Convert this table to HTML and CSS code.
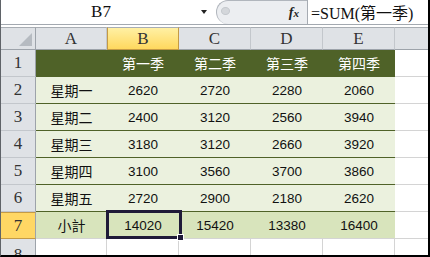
FILE: index.html
```html
<!DOCTYPE html>
<html lang="zh-Hant">
<head>
    <meta charset="UTF-8">
    <title>Excel 小計</title>
    <link rel="stylesheet" href="styles.css">
</head>
<body>

<div class="sheet">
    <div class="formula-bar">
        <div class="name-box">
            <span class="cell-ref">B7</span>
            <span class="drop-arrow"></span>
        </div>
        <div class="fx-area">
            <span class="knob"></span>
            <span class="fx">f<span class="fx-x">x</span></span>
        </div>
        <div class="formula">=SUM(第一季)</div>
    </div>
    <div class="divider"></div>

    <div class="grid">
        <!-- header row -->
        <div class="corner"><span class="tri"></span></div>
        <div class="col-head">A</div>
        <div class="col-head active">B</div>
        <div class="col-head">C</div>
        <div class="col-head">D</div>
        <div class="col-head">E</div>
        <div class="col-head last"></div>

        <!-- row 1 -->
        <div class="row-head">1</div>
        <div class="cell title"></div>
        <div class="cell title">第一季</div>
        <div class="cell title">第二季</div>
        <div class="cell title">第三季</div>
        <div class="cell title">第四季</div>
        <div class="cell blank"></div>

        <div class="row-head">2</div>
        <div class="cell day">星期一</div>
        <div class="cell day num">2620</div>
        <div class="cell day num">2720</div>
        <div class="cell day num">2280</div>
        <div class="cell day num">2060</div>
        <div class="cell blank"></div>

        <div class="row-head">3</div>
        <div class="cell day">星期二</div>
        <div class="cell day num">2400</div>
        <div class="cell day num">3120</div>
        <div class="cell day num">2560</div>
        <div class="cell day num">3940</div>
        <div class="cell blank"></div>

        <div class="row-head">4</div>
        <div class="cell day">星期三</div>
        <div class="cell day num">3180</div>
        <div class="cell day num">3120</div>
        <div class="cell day num">2660</div>
        <div class="cell day num">3920</div>
        <div class="cell blank"></div>

        <div class="row-head">5</div>
        <div class="cell day">星期四</div>
        <div class="cell day num">3100</div>
        <div class="cell day num">3560</div>
        <div class="cell day num">3700</div>
        <div class="cell day num">3860</div>
        <div class="cell blank"></div>

        <div class="row-head">6</div>
        <div class="cell day">星期五</div>
        <div class="cell day num">2720</div>
        <div class="cell day num">2900</div>
        <div class="cell day num">2180</div>
        <div class="cell day num">2620</div>
        <div class="cell blank"></div>

        <div class="row-head active">7</div>
        <div class="cell total">小計</div>
        <div class="cell total num selected">14020<span class="fill-handle"></span></div>
        <div class="cell total num">15420</div>
        <div class="cell total num">13380</div>
        <div class="cell total num">16400</div>
        <div class="cell blank"></div>

        <div class="row-head cut">8</div>
        <div class="cell empty"></div>
        <div class="cell empty"></div>
        <div class="cell empty"></div>
        <div class="cell empty"></div>
        <div class="cell empty"></div>
        <div class="cell empty last"></div>
    </div>
</div>

</body>
</html>
```

FILE: styles.css
```css
body {
    margin: 0;
    padding: 0;
    background: white;
}
.sheet {
    width: 430px;
    height: 257px;
    box-sizing: border-box;
    border-left: 1px solid #5f6368;
    border-right: 2px solid #000;
    border-bottom: 2px solid #000;
    display: flex;
    flex-direction: column;
    overflow: hidden;
    background: white;
}

/* formula bar */
.formula-bar {
    height: 24px;
    border-bottom: 1px solid #a3a9b0;
    display: flex;
    flex-shrink: 0;
}
.name-box {
    width: 215px;
    display: flex;
    align-items: center;
}
.cell-ref {
    flex: 1;
    text-align: center;
    font-family: "Liberation Serif", serif;
    font-size: 17px;
    color: #111;
}
.drop-arrow {
    width: 0;
    height: 0;
    border-left: 3px solid transparent;
    border-right: 3px solid transparent;
    border-top: 4px solid #222;
    margin-right: 9px;
}
.fx-area {
    width: 91px;
    background: #eceef1;
    border: 1px solid #b1b6bd;
    border-right: none;
    border-bottom: none;
    border-radius: 12px 0 0 12px;
    display: flex;
    align-items: center;
    justify-content: space-between;
    padding: 0 8px 0 4px;
    box-sizing: border-box;
}
.knob {
    width: 7px;
    height: 6px;
    border-radius: 50%;
    background: #d4d7db;
    border: 1px solid #c4c8cd;
    margin-top: -4px;
}
.fx {
    font-family: "Liberation Serif", serif;
    font-style: italic;
    font-weight: bold;
    font-size: 14px;
    color: #222;
}
.fx-x {
    font-size: 11px;
}
.formula {
    flex: 1;
    border-left: 1px solid #a6abb2;
    font-family: "Liberation Serif", "Noto Sans CJK TC", serif;
    font-size: 16px;
    color: #111;
    padding-left: 3px;
    display: flex;
    align-items: center;
}
.divider {
    height: 2px;
    flex-shrink: 0;
}

/* sheet grid */
.grid {
    flex: 1;
    display: grid;
    grid-template-columns: 35px 71px 72px 72px 72px 72px 1fr;
    grid-template-rows: 23px repeat(7, 27px) 1fr;
}
.grid > div {
    box-sizing: border-box;
    display: flex;
    align-items: center;
    justify-content: center;
}
.corner,
.col-head {
    background: #dfe2e6;
    border-top: 1px solid #a8adb3;
    border-bottom: 1px solid #9da3aa;
    border-right: 1px solid #c3c7cc;
}
.corner {
    border-right-color: #9da3aa;
    position: relative;
}
.tri {
    position: absolute;
    right: 3px;
    bottom: 3px;
    width: 0;
    height: 0;
    border-left: 13px solid transparent;
    border-bottom: 13px solid #b6bbc1;
}
.col-head {
    font-family: "Liberation Serif", serif;
    font-size: 17px;
    color: #333;
}
.col-head.active {
    background: linear-gradient(#fff0a4, #ffd85e);
    border: 1px solid #c49a45;
    border-top-color: #a8adb3;
}
.col-head.last {
    border-right: none;
}
.row-head {
    background: #dfe2e6;
    border-right: 1px solid #9da3aa;
    border-bottom: 1px solid #c3c7cc;
    font-family: "Liberation Serif", serif;
    font-size: 17px;
    color: #333;
}
.row-head.active {
    background: #ffd764;
    border-bottom: 1px solid #c49a45;
    border-top: 1px solid #c49a45;
}
.grid > .row-head.cut {
    align-items: flex-start;
    padding-top: 6px;
    border-bottom: none;
}

.cell {
    font-family: "Liberation Sans", "Noto Sans CJK TC", sans-serif;
    font-size: 14px;
    color: #111;
}
.num {
    font-size: 13.5px;
}
.title {
    background: #4f6228;
    color: white;
    border-bottom: 1px solid #4f6228;
}
.day {
    background: #ebf1de;
    border-bottom: 1px solid #4f6228;
}
.total {
    background: #d8e4bc;
    border-bottom: 1px solid #d4d4d4;
}
.blank {
    background: white;
    border-bottom: 1px solid #d4d4d4;
}
.empty {
    background: white;
    border-right: 1px solid #d4d4d4;
}
.empty.last {
    border-right: none;
}

/* active cell */
.selected {
    position: relative;
}
.selected::after {
    content: "";
    position: absolute;
    top: -2px;
    left: -1px;
    right: -3px;
    bottom: -1px;
    border: 3px solid #1f1a38;
}
.fill-handle {
    position: absolute;
    right: -5px;
    bottom: -3px;
    width: 5px;
    height: 5px;
    background: #1f1a38;
    border: 1px solid white;
    z-index: 2;
}
```
